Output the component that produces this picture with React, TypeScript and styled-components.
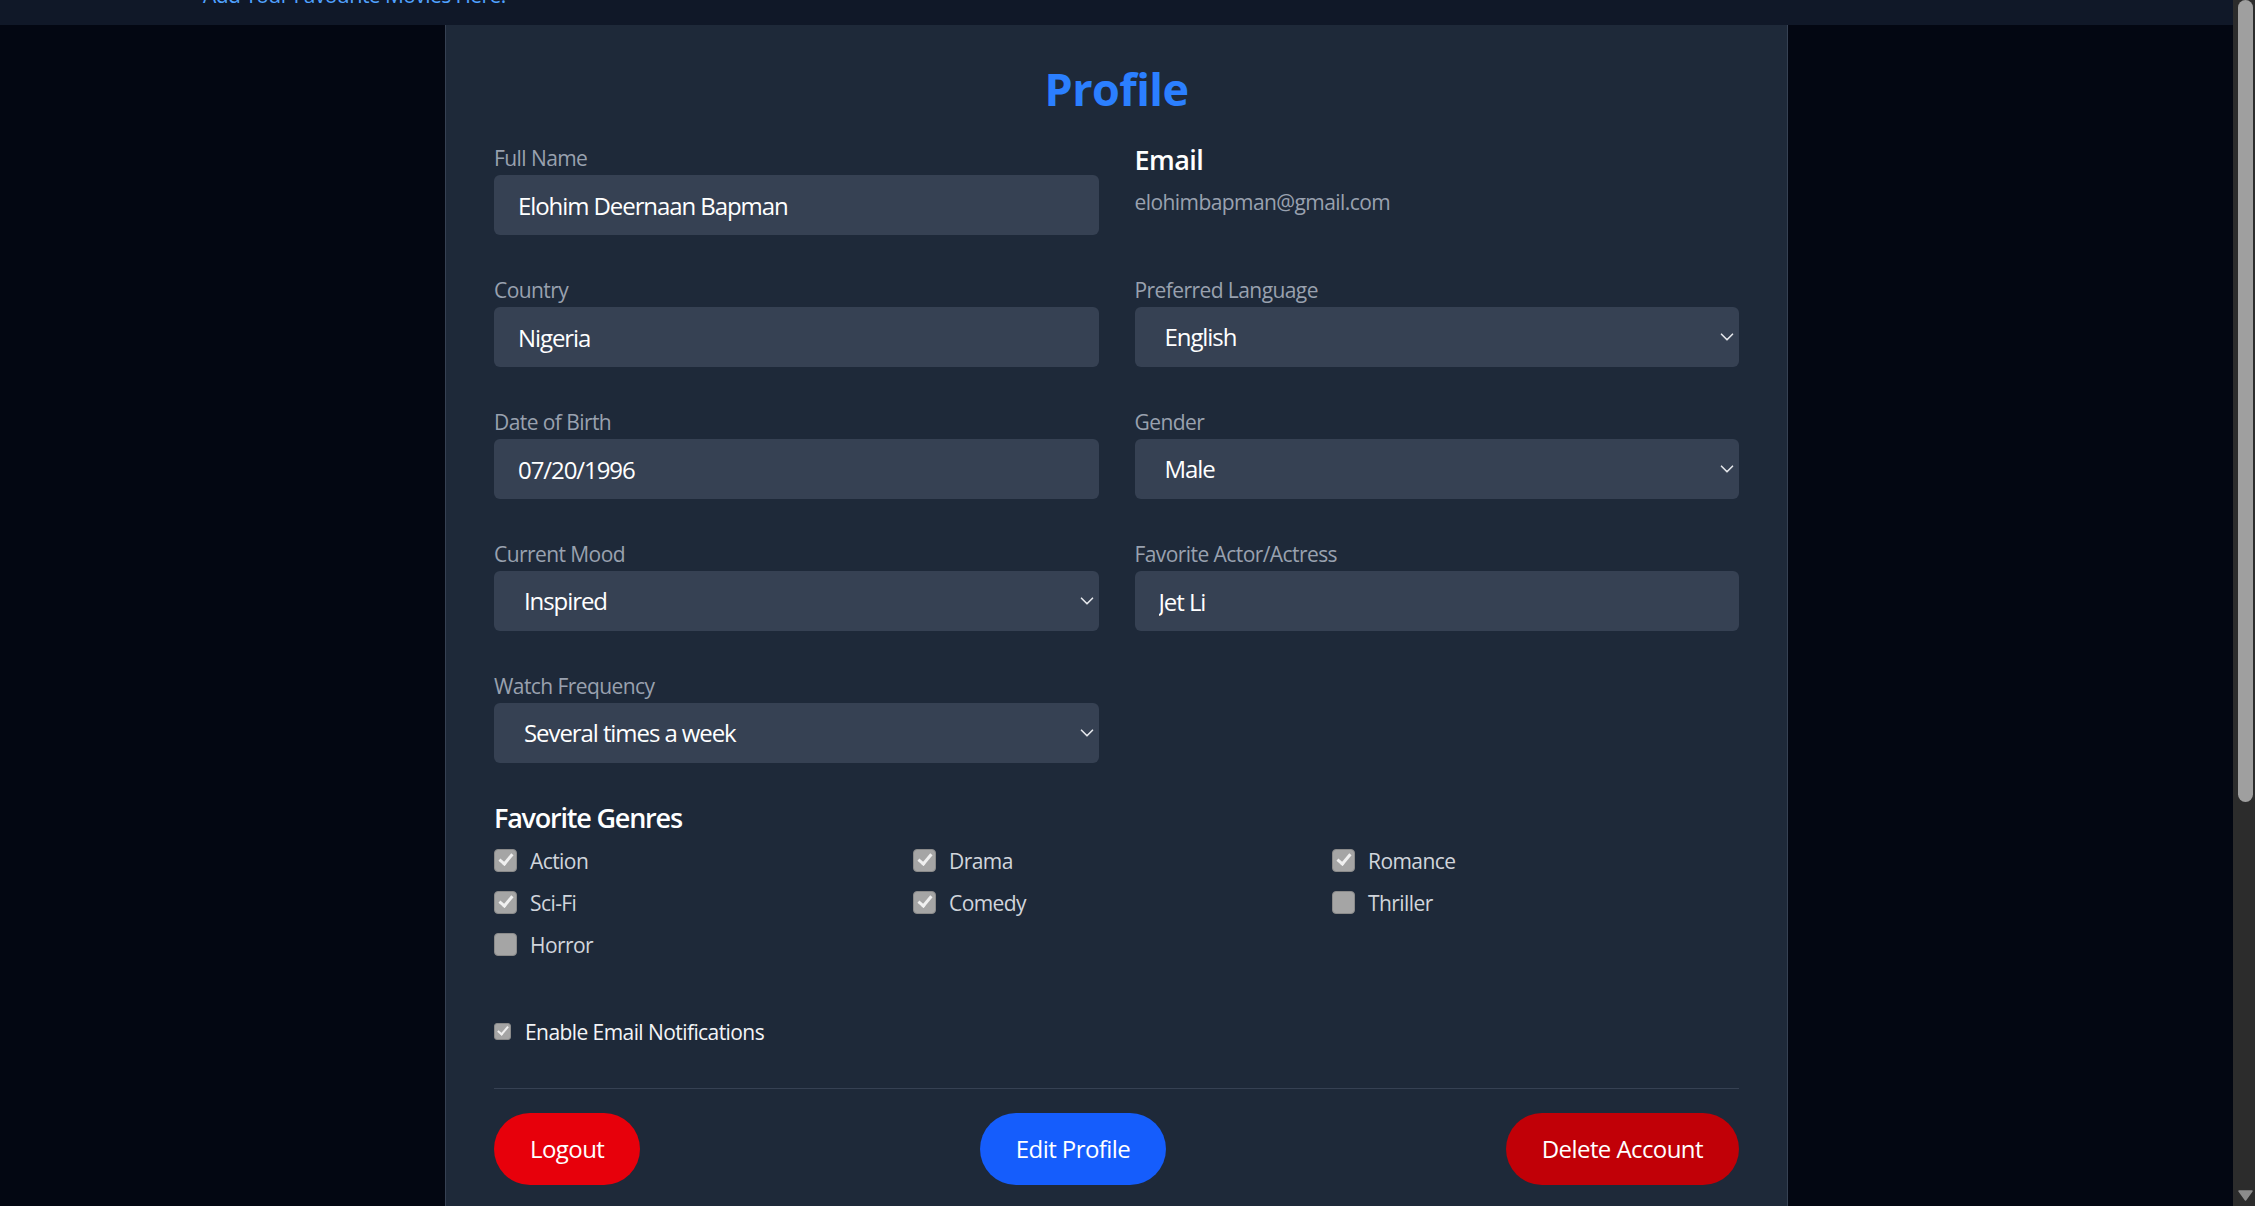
import React from "react";
import styled, { createGlobalStyle } from "styled-components";

const GlobalStyle = createGlobalStyle`
  *, *::before, *::after { box-sizing: border-box; }
  html, body { margin: 0; padding: 0; height: 100%; overflow: hidden; background: #030712; }
  body {
    font-family: "Open Sans", "Noto Sans", "Liberation Sans", sans-serif;
    letter-spacing: -0.036em;
    color: #ffffff;
  }
  #root { height: 100%; }
`;

const Shell = styled.div`
  display: flex;
  width: 100vw;
  height: 100vh;
`;

const Viewport = styled.div`
  flex: 1;
  min-width: 0;
  display: flex;
  flex-direction: column;
  overflow: hidden;
  background: #030712;
`;

const TopBar = styled.header`
  flex: none;
  height: 25px;
  overflow: hidden;
  background: #101828;
  padding-left: 203px;
`;

const Tagline = styled.p`
  margin: -20px 0 0;
  font-size: 21px;
  line-height: 30px;
  color: #51a2ff;
`;

const Stage = styled.main`
  flex: 1;
  min-height: 0;
  display: flex;
  justify-content: center;
  overflow: hidden;
`;

const Card = styled.section`
  width: 1343px;
  flex: none;
  background: #1e2939;
  border-left: 1px solid #364153;
  border-right: 1px solid #364153;
  padding: 37px 48px 48px;
`;

const Title = styled.h1`
  margin: 0 0 27px;
  text-align: center;
  font-size: 45px;
  line-height: 54px;
  font-weight: 700;
  color: #2b7fff;
`;

const FieldGrid = styled.div`
  display: grid;
  grid-template-columns: 1fr 1fr;
  column-gap: 36px;
  row-gap: 40px;
  align-items: start;
`;

const Field = styled.div`
  display: flex;
  flex-direction: column;
`;

const Label = styled.label`
  display: block;
  margin-bottom: 2px;
  font-size: 21px;
  line-height: 30px;
  color: #99a1af;
`;

const controlBase = `
  width: 100%;
  height: 60px;
  border: none;
  border-radius: 6px;
  background: #364153;
  color: #ffffff;
  font-family: inherit;
  font-size: 24px;
  line-height: 36px;
  letter-spacing: -0.045em;
  outline: none;
  margin: 0;
`;

const TextInput = styled.input`
  ${controlBase}
  padding: 12px 24px;
`;

const SelectWrap = styled.div`
  position: relative;
  width: 100%;
`;

const Select = styled.select`
  ${controlBase}
  appearance: none;
  -webkit-appearance: none;
  padding: 12px 40px 12px 30px;
`;

const Chevron = styled.svg`
  position: absolute;
  right: 1px;
  top: 50%;
  transform: translateY(-50%);
  pointer-events: none;
`;

const EmailHeading = styled.h2`
  margin: 0 0 10px;
  font-size: 27px;
  line-height: 34px;
  font-weight: 600;
  color: #ffffff;
`;

const EmailValue = styled.p`
  margin: 0;
  font-size: 21px;
  line-height: 30px;
  color: #99a1af;
`;

const SectionTitle = styled.h3`
  margin: 34px 0 7px;
  font-size: 27px;
  line-height: 42px;
  font-weight: 600;
  letter-spacing: -0.045em;
  color: #ffffff;
`;

const GenreGrid = styled.div`
  display: grid;
  grid-template-columns: repeat(3, 1fr);
  gap: 12px;
`;

const CheckRow = styled.label<{ $tone?: string; $gap?: number }>`
  display: flex;
  align-items: center;
  gap: ${(p) => p.$gap ?? 13}px;
  font-size: 21px;
  line-height: 30px;
  color: ${(p) => p.$tone ?? "#d1d5dc"};
`;

const Box = styled.input<{ $size: number }>`
  appearance: none;
  -webkit-appearance: none;
  position: relative;
  flex: none;
  margin: -2px 0 0;
  width: ${(p) => p.$size}px;
  height: ${(p) => p.$size}px;
  border-radius: ${(p) => (p.$size > 20 ? 4 : 3)}px;
  background: #a5a5a5;
  border: 1px solid #8a8a8a;

  &:checked::after {
    content: "";
    position: absolute;
    left: ${(p) => (p.$size > 20 ? 7 : 5)}px;
    top: ${(p) => (p.$size > 20 ? 1 : 0)}px;
    width: ${(p) => (p.$size > 20 ? 8 : 6)}px;
    height: ${(p) => (p.$size > 20 ? 14 : 11)}px;
    border-right: ${(p) => (p.$size > 20 ? 3.5 : 2.5)}px solid #f0f0f0;
    border-bottom: ${(p) => (p.$size > 20 ? 3.5 : 2.5)}px solid #f0f0f0;
    transform: rotate(40deg);
  }
`;

const NotifyRow = styled.div`
  margin-top: 57px;
`;

const Footer = styled.div`
  margin-top: 41px;
  padding-top: 24px;
  border-top: 1px solid #364153;
  display: flex;
  justify-content: space-between;
  align-items: center;
`;

const PillButton = styled.button<{ $bg: string }>`
  border: none;
  border-radius: 9999px;
  padding: 18px 36px;
  background: ${(p) => p.$bg};
  color: #ffffff;
  font-family: inherit;
  font-size: 24px;
  line-height: 36px;
  letter-spacing: inherit;
  cursor: pointer;
`;

const ScrollTrack = styled.div`
  flex: none;
  width: 22px;
  height: 100%;
  background: #2c2c2c;
  display: flex;
  flex-direction: column;
  align-items: center;
  padding: 0 2px 5px 5px;
`;

const ScrollThumb = styled.div`
  width: 15px;
  height: 802px;
  border-radius: 8px;
  background: #9f9f9f;
`;

const ScrollSpacer = styled.div`
  flex: 1;
`;

const ChevronDown = () => (
  <Chevron width="22" height="22" viewBox="0 0 24 24" fill="none" stroke="#e5e7eb" strokeWidth="1.8" strokeLinecap="round" strokeLinejoin="round">
    <path d="m6 9 6 6 6-6" />
  </Chevron>
);

const SelectField = ({ label, value, options }: { label: string; value: string; options: string[] }) => (
  <Field>
    <Label>{label}</Label>
    <SelectWrap>
      <Select defaultValue={value}>
        {options.map((o) => (
          <option key={o} value={o}>
            {o}
          </option>
        ))}
      </Select>
      <ChevronDown />
    </SelectWrap>
  </Field>
);

const InputField = ({ label, value }: { label: string; value: string }) => (
  <Field>
    <Label>{label}</Label>
    <TextInput type="text" defaultValue={value} />
  </Field>
);

const genres: { name: string; checked: boolean }[] = [
  { name: "Action", checked: true },
  { name: "Drama", checked: true },
  { name: "Romance", checked: true },
  { name: "Sci-Fi", checked: true },
  { name: "Comedy", checked: true },
  { name: "Thriller", checked: false },
  { name: "Horror", checked: false },
];

export default function App() {
  return (
    <>
      <GlobalStyle />
      <Shell>
        <Viewport>
          <TopBar>
            <Tagline>Add Your Favourite Movies Here!</Tagline>
          </TopBar>
          <Stage>
            <Card>
              <Title>Profile</Title>
              <FieldGrid>
                <InputField label="Full Name" value="Elohim Deernaan Bapman" />
                <Field>
                  <EmailHeading>Email</EmailHeading>
                  <EmailValue>elohimbapman@gmail.com</EmailValue>
                </Field>
                <InputField label="Country" value="Nigeria" />
                <SelectField label="Preferred Language" value="English" options={["English", "French", "Spanish", "Yoruba"]} />
                <InputField label="Date of Birth" value="07/20/1996" />
                <SelectField label="Gender" value="Male" options={["Male", "Female", "Other"]} />
                <SelectField label="Current Mood" value="Inspired" options={["Happy", "Inspired", "Relaxed", "Adventurous"]} />
                <InputField label="Favorite Actor/Actress" value="Jet Li" />
                <SelectField
                  label="Watch Frequency"
                  value="Several times a week"
                  options={["Daily", "Several times a week", "Weekly", "Monthly"]}
                />
              </FieldGrid>

              <SectionTitle>Favorite Genres</SectionTitle>
              <GenreGrid>
                {genres.map((g) => (
                  <CheckRow key={g.name}>
                    <Box type="checkbox" $size={23} defaultChecked={g.checked} disabled />
                    {g.name}
                  </CheckRow>
                ))}
              </GenreGrid>

              <NotifyRow>
                <CheckRow $tone="#f3f4f6" $gap={14}>
                  <Box type="checkbox" $size={17} defaultChecked disabled />
                  Enable Email Notifications
                </CheckRow>
              </NotifyRow>

              <Footer>
                <PillButton $bg="#e7000b">Logout</PillButton>
                <PillButton $bg="#155dfc">Edit Profile</PillButton>
                <PillButton $bg="#c10007">Delete Account</PillButton>
              </Footer>
            </Card>
          </Stage>
        </Viewport>
        <ScrollTrack>
          <ScrollThumb />
          <ScrollSpacer />
          <svg width="15" height="11" viewBox="0 0 15 11">
            <path d="M1 1 H14 L7.5 10 Z" fill="#8c8c8c" stroke="#8c8c8c" strokeWidth="1.5" strokeLinejoin="round" />
          </svg>
        </ScrollTrack>
      </Shell>
    </>
  );
}
